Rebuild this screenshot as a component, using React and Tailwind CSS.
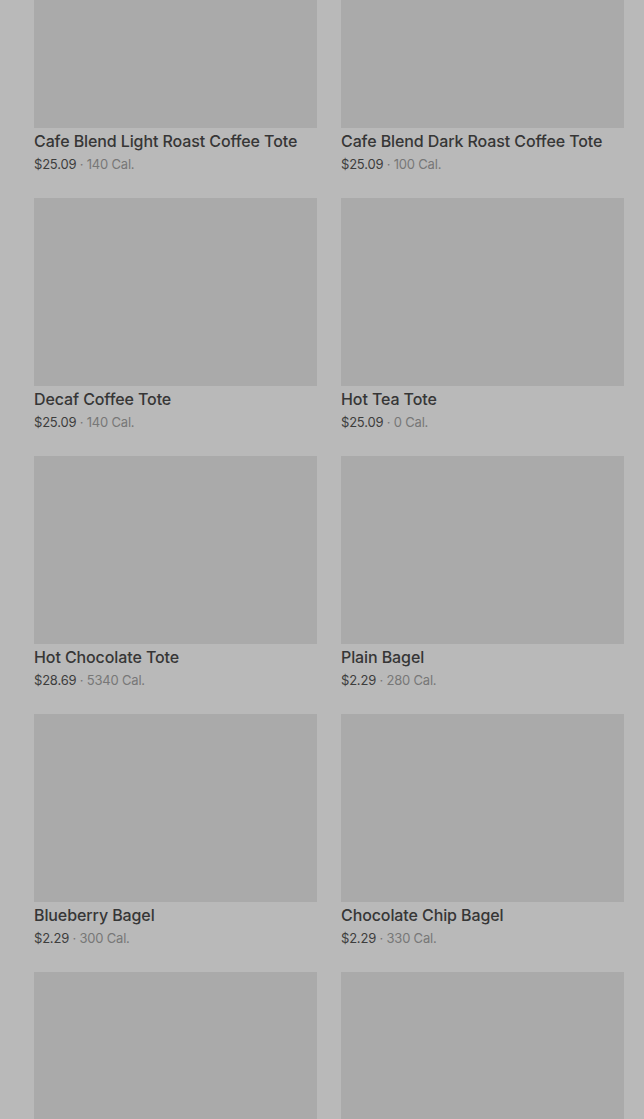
const items = [
  { name: "Cafe Blend Light Roast Coffee Tote", price: "$25.09", cal: "140 Cal." },
  { name: "Cafe Blend Dark Roast Coffee Tote", price: "$25.09", cal: "100 Cal." },
  { name: "Decaf Coffee Tote", price: "$25.09", cal: "140 Cal." },
  { name: "Hot Tea Tote", price: "$25.09", cal: "0 Cal." },
  { name: "Hot Chocolate Tote", price: "$28.69", cal: "5340 Cal." },
  { name: "Plain Bagel", price: "$2.29", cal: "280 Cal." },
  { name: "Blueberry Bagel", price: "$2.29", cal: "300 Cal." },
  { name: "Chocolate Chip Bagel", price: "$2.29", cal: "330 Cal." },
  { name: null },
  { name: null },
];

export default function App() {
  return (
    <div
      className="h-[1119px] overflow-hidden bg-[#b9b9b9] pl-[34px] pr-[20px]"
      style={{ fontFamily: "Inter, 'Liberation Sans', sans-serif" }}
    >
      {/* menu grid, scrolled so the first row is cut at the top */}
      <div className="mt-[-60px] grid grid-cols-2 gap-x-6 gap-y-6">
        {items.map((item, i) => (
          <div key={i} className="flex flex-col">
            <div className="h-[188px] w-full bg-[#aaaaaa]" />
            {item.name && (
              <div className="pt-[3px]">
                <div className="text-[16px] leading-5 font-medium text-[#363636] tracking-[-0.1px] truncate">
                  {item.name}
                </div>
                <div className="mt-[3px] text-[13px] leading-5 text-[#3d3d3d] tracking-[-0.2px]">
                  {item.price}
                  <span className="text-[#777777]"> · {item.cal}</span>
                </div>
              </div>
            )}
          </div>
        ))}
      </div>
    </div>
  );
}
